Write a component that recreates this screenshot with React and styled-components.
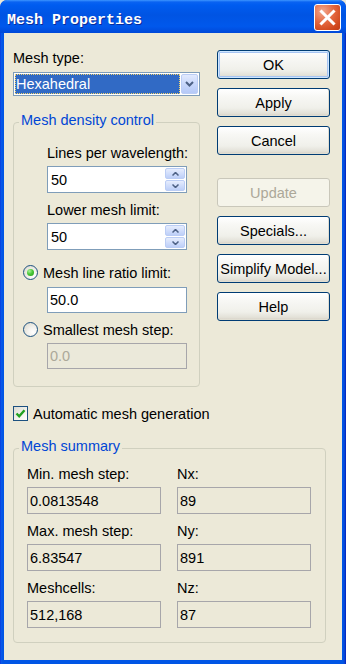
import React from 'react';
import styled, { createGlobalStyle, css } from 'styled-components';

const GlobalStyle = createGlobalStyle`
  html, body { margin: 0; padding: 0; background: #ECE9D8; }
  body { font-family: "Liberation Sans", Arial, sans-serif; font-size: 14.5px; color: #000; }
  * { box-sizing: border-box; }
`;

const Window = styled.div`
  width: 346px;
  height: 664px;
  display: flex;
  flex-direction: column;
  background: linear-gradient(to right, #0831D9 0px, #0A58EA 1px, #0055E5 3px, #0055E5 calc(100% - 3px), #0A3FD0 calc(100% - 1px), #0019B8 100%);
  border-radius: 7px 7px 0 0;
  overflow: hidden;
`;

const TitleBar = styled.div`
  height: 33px;
  flex: none;
  display: flex;
  align-items: center;
  padding: 0 5px 0 7px;
  border-radius: 7px 7px 0 0;
  background: linear-gradient(to bottom, #3D95FF 0px, #0A63F2 2px, #005CF0 5px, #0054E3 45%, #0058EC 80%, #0048D8 100%);
`;

const Title = styled.span`
  flex: 1;
  padding-top: 8px;
  color: #fff;
  font: bold 15px "Liberation Mono", "DejaVu Sans Mono", monospace;
  text-shadow: 1px 1px 0 #0A2C9A;
  white-space: nowrap;
`;

const CloseButton = styled.div`
  width: 27px;
  height: 27px;
  margin-top: 2px;
  border: 1px solid #fff;
  border-radius: 3px;
  background: radial-gradient(circle at 30% 25%, #F2A88E 0%, #E4673F 45%, #D34B20 75%, #C03A15 100%);
  display: flex;
  align-items: center;
  justify-content: center;
`;

const Client = styled.div`
  flex: 1;
  margin: 0 4px 4px;
  background: #ECE9D8;
  padding-left: 9px;
  display: flex;
  flex-direction: column;
`;

const TopSection = styled.div`
  display: flex;
  align-items: flex-start;
`;

const LeftCol = styled.div`
  width: 187px;
  padding-top: 17px;
  display: flex;
  flex-direction: column;
`;

const Label = styled.div`
  font-size: 14.5px;
  line-height: 17px;
  white-space: nowrap;
  margin-top: ${p => p.$mt || 0}px;
`;

const ComboBox = styled.div`
  margin-top: 5px;
  height: 24px;
  border: 1px solid #7F9DB9;
  background: #fff;
  padding: 1px;
  display: flex;
  gap: 1px;
`;

const ComboValue = styled.div`
  flex: 1;
  background: #316AC5;
  color: #fff;
  line-height: 20px;
  padding-left: 1px;
  outline: 1px dotted #F3D36A;
  outline-offset: -1px;
`;

const ComboButton = styled.div`
  width: 17px;
  border: 1px solid #BBCDF5;
  border-radius: 2px;
  background: linear-gradient(to bottom, #E2EAFE 0%, #C8D7FB 50%, #B5C9F7 100%);
  display: flex;
  align-items: center;
  justify-content: center;
`;

const Group = styled.fieldset`
  width: ${p => p.$width}px;
  min-width: 0;
  margin: ${p => p.$mt}px 0 0;
  padding: ${p => p.$pt}px 0 ${p => p.$pb}px;
  border: 1px solid #D0D0BF;
  border-radius: 4px;
`;

const Legend = styled.legend`
  margin-left: 5px;
  padding: 0 2px 4px;
  font-size: 14.5px;
  line-height: 17px;
  color: #0046D5;
  white-space: nowrap;
`;

const GroupBody = styled.div`
  display: flex;
  flex-direction: column;
`;

const Indented = styled.div`
  padding-left: 33px;
  display: flex;
  flex-direction: column;
`;

const SpinBox = styled.div`
  width: 140px;
  height: 27px;
  margin-top: ${p => p.$mt || 0}px;
  border: 1px solid #7F9DB9;
  background: #fff;
  padding: 1px;
  display: flex;
`;

const FieldText = styled.div`
  flex: 1;
  padding-left: 2px;
  display: flex;
  align-items: center;
  font-size: 14.5px;
  white-space: nowrap;
`;

const SpinButtons = styled.div`
  width: 20px;
  display: flex;
  flex-direction: column;
  gap: 1px;
`;

const SpinButton = styled.div`
  flex: 1;
  border: 1px solid #BBCDF5;
  border-radius: 2px;
  background: linear-gradient(to bottom, #E6EDFD 0%, #CFDCFB 55%, #BDCFF8 100%);
  display: flex;
  align-items: center;
  justify-content: center;
`;

const TextBox = styled.div`
  width: ${p => p.$width || 140}px;
  height: ${p => p.$height || 26}px;
  margin-top: ${p => p.$mt || 0}px;
  border: 1px solid #7F9DB9;
  background: #fff;
  padding: 0 2px;
  display: flex;
  align-items: center;
  font-size: 14.5px;
  white-space: nowrap;
  ${p => p.$disabled && css`
    border-color: #A7A6AA;
    background: #EBE9DA;
    color: #ACA899;
  `}
  ${p => p.$readonly && css`
    border-color: #A7A6AA;
    background: #ECE9D8;
    color: #000;
  `}
`;

const RadioRow = styled.div`
  margin: ${p => p.$mt || 0}px 0 0 9px;
  height: 17px;
  display: flex;
  align-items: center;
  gap: 5px;
  font-size: 14.5px;
  white-space: nowrap;
`;

const RadioCircle = styled.span`
  width: 15px;
  height: 15px;
  flex: none;
  border-radius: 50%;
  border: 1px solid #1C5180;
  background: radial-gradient(circle at 70% 70%, #FFFFFF 0%, #F2F1EC 40%, #D9D6C8 100%);
  display: flex;
  align-items: center;
  justify-content: center;
`;

const RadioDot = styled.span`
  width: 7px;
  height: 7px;
  border-radius: 50%;
  background: radial-gradient(circle at 35% 30%, #A6F29A 0%, #4CC83A 45%, #1F9A14 100%);
`;

const CheckRow = styled.div`
  margin-top: 18px;
  height: 17px;
  display: flex;
  align-items: center;
  gap: 5px;
  font-size: 14.5px;
  white-space: nowrap;
`;

const CheckBox = styled.span`
  width: 15px;
  height: 15px;
  flex: none;
  border: 1px solid #1C5180;
  background: linear-gradient(135deg, #DCDBD3 0%, #F4F3EE 60%, #FFFFFF 100%);
  display: flex;
  align-items: center;
  justify-content: center;
`;

const ButtonColumn = styled.div`
  margin-left: 17px;
  padding-top: 17px;
  width: 113px;
  display: flex;
  flex-direction: column;
  gap: 9px;
`;

const Button = styled.button`
  width: 113px;
  height: 29px;
  padding: 0;
  margin-top: ${p => p.$mt || 0}px;
  font: 14.5px "Liberation Sans", Arial, sans-serif;
  color: #000;
  border: 1px solid #003C74;
  border-radius: 3px;
  background: linear-gradient(to bottom, #FFFFFF 0%, #F7F7F4 30%, #F0F0EA 70%, #E3E1D8 90%, #D6D0C5 100%);
  box-shadow: inset -1px -1px 0 #E0DED2;
  white-space: nowrap;
  ${p => p.$default && css`
    box-shadow: inset 0 0 0 1px #CEE7FF, inset 0 0 0 2px #A7C4F2;
  `}
  &:disabled {
    border-color: #C9C7BA;
    color: #ACA899;
    background: #F5F4EA;
    box-shadow: none;
  }
`;

const SummaryGrid = styled.div`
  display: grid;
  grid-template-columns: 134px 134px;
  column-gap: 16px;
  row-gap: 9px;
  padding-left: 13px;
`;

const Cell = styled.div`
  display: flex;
  flex-direction: column;
`;

const Chevron = () => (
  <svg width="9" height="6" viewBox="0 0 9 6">
    <path d="M1 1 L4.5 4.5 L8 1" fill="none" stroke="#4D6185" strokeWidth="2" />
  </svg>
);

const SpinArrow = ({ up }) => (
  <svg width="7" height="4" viewBox="0 0 7 4">
    <path d={up ? 'M0.5 3.5 L3.5 0.5 L6.5 3.5' : 'M0.5 0.5 L3.5 3.5 L6.5 0.5'} fill="none" stroke="#4D6185" strokeWidth="1.5" />
  </svg>
);

const Spinner = ({ value, mt }) => (
  <SpinBox $mt={mt}>
    <FieldText>{value}</FieldText>
    <SpinButtons>
      <SpinButton><SpinArrow up /></SpinButton>
      <SpinButton><SpinArrow /></SpinButton>
    </SpinButtons>
  </SpinBox>
);

const Radio = ({ checked, children, mt }) => (
  <RadioRow $mt={mt}>
    <RadioCircle>{checked && <RadioDot />}</RadioCircle>
    <span>{children}</span>
  </RadioRow>
);

const SummaryField = ({ label, value }) => (
  <Cell>
    <Label>{label}</Label>
    <TextBox $readonly $width={134} $height={27} $mt={4}>{value}</TextBox>
  </Cell>
);

export default function App() {
  return (
    <>
      <GlobalStyle />
      <Window>
        <TitleBar>
          <Title>Mesh Properties</Title>
          <CloseButton aria-label="Close">
            <svg width="17" height="17" viewBox="0 0 17 17">
              <path d="M2.5 2.5 L14.5 14.5 M14.5 2.5 L2.5 14.5" stroke="#fff" strokeWidth="3" strokeLinecap="square" />
            </svg>
          </CloseButton>
        </TitleBar>
        <Client>
          <TopSection>
            <LeftCol>
              <Label>Mesh type:</Label>
              <ComboBox>
                <ComboValue>Hexahedral</ComboValue>
                <ComboButton><Chevron /></ComboButton>
              </ComboBox>
              <Group $width={187} $mt={16} $pt={12} $pb={17}>
                <Legend>Mesh density control</Legend>
                <GroupBody>
                  <Indented>
                    <Label>Lines per wavelength:</Label>
                    <Spinner value="50" mt={4} />
                    <Label $mt={9}>Lower mesh limit:</Label>
                    <Spinner value="50" mt={4} />
                  </Indented>
                  <Radio checked mt={14}>Mesh line ratio limit:</Radio>
                  <Indented>
                    <TextBox $mt={6}>50.0</TextBox>
                  </Indented>
                  <Radio mt={8}>Smallest mesh step:</Radio>
                  <Indented>
                    <TextBox $mt={5} $disabled>0.0</TextBox>
                  </Indented>
                </GroupBody>
              </Group>
            </LeftCol>
            <ButtonColumn>
              <Button $default>OK</Button>
              <Button>Apply</Button>
              <Button>Cancel</Button>
              <Button disabled $mt={14}>Update</Button>
              <Button>Specials...</Button>
              <Button>Simplify Model...</Button>
              <Button>Help</Button>
            </ButtonColumn>
          </TopSection>
          <CheckRow>
            <CheckBox>
              <svg width="11" height="11" viewBox="0 0 11 11">
                <path d="M1.5 5.5 L4.2 8.3 L9.5 2.3" fill="none" stroke="#21A121" strokeWidth="2.4" />
              </svg>
            </CheckBox>
            <span>Automatic mesh generation</span>
          </CheckRow>
          <Group $width={313} $mt={16} $pt={7} $pb={14}>
            <Legend>Mesh summary</Legend>
            <SummaryGrid>
              <SummaryField label="Min. mesh step:" value="0.0813548" />
              <SummaryField label="Nx:" value="89" />
              <SummaryField label="Max. mesh step:" value="6.83547" />
              <SummaryField label="Ny:" value="891" />
              <SummaryField label="Meshcells:" value="512,168" />
              <SummaryField label="Nz:" value="87" />
            </SummaryGrid>
          </Group>
        </Client>
      </Window>
    </>
  );
}
